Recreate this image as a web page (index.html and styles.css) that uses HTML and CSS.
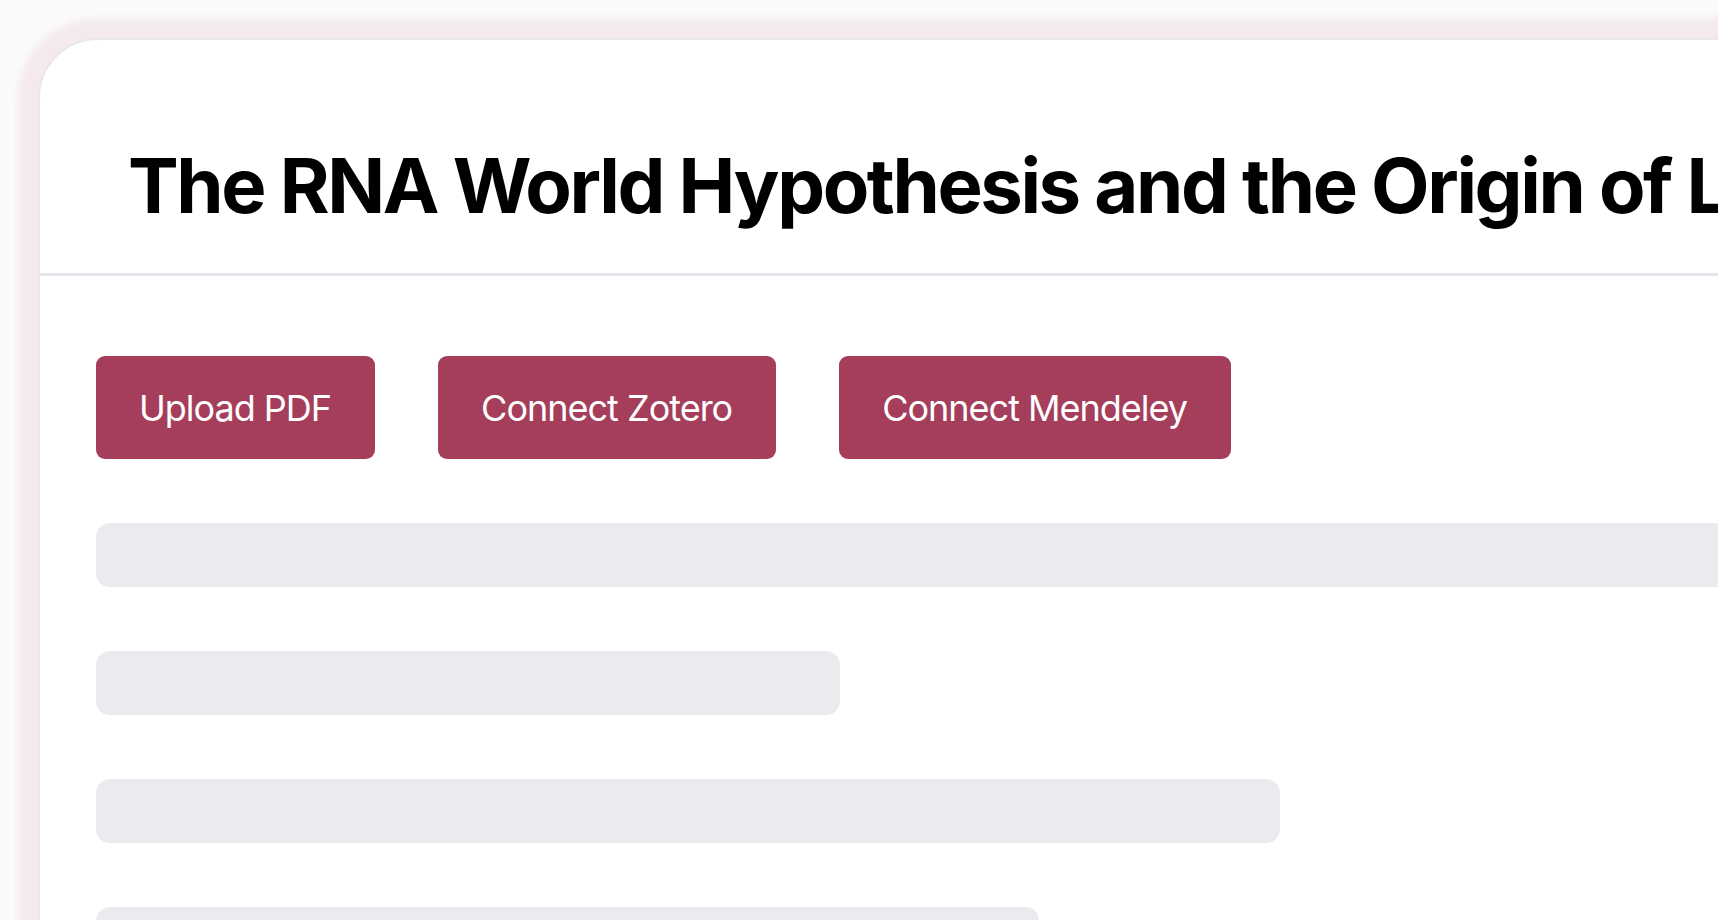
FILE: index.html
```html
<!DOCTYPE html>
<html lang="en">
<head>
<meta charset="utf-8">
<title>The RNA World Hypothesis</title>
<link rel="stylesheet" href="styles.css">
</head>
<body>
  <div class="card">
    <header class="card-header">
      <h1 class="title">The RNA World Hypothesis and the Origin of Life</h1>
    </header>
    <section class="card-body">
      <div class="actions">
        <button class="btn">Upload PDF</button>
        <button class="btn">Connect Zotero</button>
        <button class="btn">Connect Mendeley</button>
      </div>
      <div class="skeleton">
        <div class="bar bar-full"></div>
        <div class="bar bar-2"></div>
        <div class="bar bar-3"></div>
        <div class="bar bar-4"></div>
      </div>
    </section>
  </div>
</body>
</html>
```

FILE: styles.css
```css
html, body {
  margin: 0;
  padding: 0;
  height: 100%;
  overflow: hidden;
}

body {
  background: #fbfafb;
  font-family: Inter, "Noto Sans", "Liberation Sans", sans-serif;
}

.card {
  margin: 38px 0 0 38px;
  width: 1900px;
  height: 1200px;
  background: #ffffff;
  border: 2px solid #e9e7ed;
  border-radius: 60px;
  box-shadow: 0 0 6px 20px rgba(236, 214, 222, 0.45);
}

.card-header {
  padding: 107px 0 50px 88px;
  border-bottom: 3px solid #e4e4ea;
}

.title {
  margin: 0;
  font-size: 76px;
  line-height: 76px;
  font-weight: 700;
  color: #000;
  white-space: nowrap;
  letter-spacing: -2.4px;
}

.card-body {
  padding: 80px 0 0 56px;
}

.actions {
  display: flex;
  gap: 63px;
}

.btn {
  height: 103px;
  padding: 0 44px 0 43px;
  border: none;
  border-radius: 9px;
  background: #a53e5b;
  color: #ffffff;
  font-family: Inter, "Noto Sans", "Liberation Sans", sans-serif;
  font-size: 36px;
  font-weight: 400;
  letter-spacing: -1px;
}

.skeleton {
  margin-top: 64px;
  display: flex;
  flex-direction: column;
  gap: 64px;
}

.bar {
  height: 64px;
  border-radius: 14px;
  background: #ebebef;
}

.bar-full { width: 1800px; }
.bar-2 { width: 744px; }
.bar-3 { width: 1184px; }
.bar-4 { width: 943px; }
```
